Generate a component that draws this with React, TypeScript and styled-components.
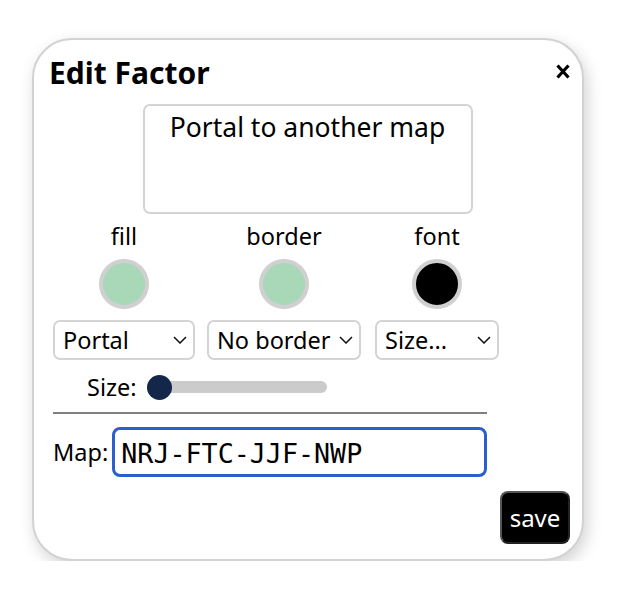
import React from "react";
import styled, { createGlobalStyle } from "styled-components";

const Global = createGlobalStyle`
  html, body { margin: 0; padding: 0; background: #fff; }
  body { font-family: "Noto Sans", "Open Sans", sans-serif; color: #000; }
  * { box-sizing: border-box; }
`;

const Page = styled.div`
  padding: 38px 0 0 32px;
`;

const Card = styled.div`
  width: 552px;
  border: 2px solid #d2d2d2;
  border-radius: 40px;
  background: #fff;
  box-shadow: 3px 6px 16px rgba(0, 0, 0, 0.18);
  padding: 12px 12px 15px 15px;
  display: flex;
  flex-direction: column;
`;

const Header = styled.div`
  display: flex;
  align-items: center;
  justify-content: space-between;
  padding-right: 0;
  height: 42px;
`;

const Title = styled.h1`
  margin: 0;
  font-size: 30px;
  line-height: 42px;
  font-weight: 700;
`;

const CloseButton = styled.button`
  border: none;
  background: none;
  padding: 0;
  width: 14px;
  height: 15px;
  display: flex;
  cursor: pointer;
  margin-top: -4px;
`;

const Description = styled.textarea`
  align-self: center;
  width: 330px;
  height: 110px;
  margin: 10px 0 0 -4px;
  border: 2px solid #d4d4d4;
  border-radius: 7px;
  padding: 3px 6px;
  font-family: inherit;
  font-size: 26.5px;
  line-height: 36px;
  text-align: center;
  resize: none;
  outline: none;
  color: #000;
`;

const Body = styled.div`
  padding-left: 4px;
  display: flex;
  flex-direction: column;
`;

const Columns = styled.div`
  display: flex;
  gap: 12px;
  margin-top: 7px;
`;

const Column = styled.div<{ $w: number; $offset?: number }>`
  width: ${(p) => p.$w}px;
  margin-left: ${(p) => p.$offset ?? 0}px;
  display: flex;
  flex-direction: column;
  align-items: center;
`;

const Label = styled.div`
  font-size: 23.5px;
  line-height: 30px;
`;

const Swatch = styled.div<{ $color: string }>`
  width: 50px;
  height: 50px;
  margin-top: 8px;
  border-radius: 50%;
  border: 4px solid #d0d0d0;
  background: ${(p) => p.$color};
`;

const SelectWrap = styled.div`
  position: relative;
  width: 100%;
  margin-top: 11px;
`;

const Select = styled.select`
  appearance: none;
  -webkit-appearance: none;
  width: 100%;
  height: 40px;
  border: 2px solid #d4d4d4;
  border-radius: 7px;
  background: #fff;
  padding: 0 28px 0 8px;
  font-family: inherit;
  font-size: 23.5px;
  color: #000;
  outline: none;
`;

const Chevron = styled.svg`
  position: absolute;
  right: 8px;
  top: 16px;
  pointer-events: none;
`;

const SizeRow = styled.div`
  display: flex;
  align-items: center;
  gap: 10px;
  margin-top: 13px;
  padding-left: 34px;
  height: 28px;
`;

const Range = styled.input`
  -webkit-appearance: none;
  appearance: none;
  width: 180px;
  height: 25px;
  margin: 0;
  background: transparent;
  &::-webkit-slider-runnable-track {
    height: 12px;
    border-radius: 6px;
    background: #cbcbcb;
  }
  &::-webkit-slider-thumb {
    -webkit-appearance: none;
    width: 25px;
    height: 25px;
    margin-top: -6.5px;
    border-radius: 50%;
    background: #14264a;
    border: none;
  }
`;

const Divider = styled.hr`
  width: 434px;
  margin: 11px 0 0 0;
  border: none;
  border-top: 2px solid #808080;
`;

const MapRow = styled.div`
  display: flex;
  align-items: center;
  gap: 4px;
  margin-top: 13px;
  width: 434px;
`;

const MapInput = styled.input`
  flex: 1;
  height: 50px;
  border: 3px solid #2b5fcc;
  border-radius: 8px;
  padding: 2px 6px 0;
  font-family: "DejaVu Sans Mono", monospace;
  font-size: 26.7px;
  color: #000;
  outline: none;
`;

const SaveButton = styled.button`
  align-self: flex-end;
  margin-top: 14px;
  width: 70px;
  height: 53px;
  border-radius: 8px;
  border: 2px solid #555;
  border-right-color: #222;
  border-bottom-color: #222;
  background: #000;
  color: #fff;
  font-family: inherit;
  font-size: 24px;
  padding: 0;
  cursor: pointer;
`;

const ChevronIcon = () => (
  <Chevron width="14" height="8" viewBox="0 0 14 8">
    <path d="M1 1 L7 7 L13 1" fill="none" stroke="#111" strokeWidth="1.5" />
  </Chevron>
);

const columns = [
  { label: "fill", color: "#a8d8b8", width: 142, offset: 0, value: "Portal", options: ["Portal", "Rectangle", "Ellipse"] },
  { label: "border", color: "#a8d8b8", width: 154, offset: 0, value: "No border", options: ["No border", "Solid", "Dashed"] },
  { label: "font", color: "#000000", width: 124, offset: 2, value: "Size...", options: ["Size...", "Small", "Large"] },
];

export default function App() {
  return (
    <>
      <Global />
      <Page>
        <Card>
          <Header>
            <Title>Edit Factor</Title>
            <CloseButton aria-label="close">
              <svg width="14" height="15" viewBox="0 0 14 15">
                <path d="M1.5 1.5 L12.5 13.5 M12.5 1.5 L1.5 13.5" stroke="#000" strokeWidth="3.2" strokeLinecap="butt" />
              </svg>
            </CloseButton>
          </Header>
          <Description defaultValue="Portal to another map" />
          <Body>
            <Columns>
              {columns.map((c) => (
                <Column key={c.label} $w={c.width} $offset={c.offset}>
                  <Label>{c.label}</Label>
                  <Swatch $color={c.color} />
                  <SelectWrap>
                    <Select defaultValue={c.value}>
                      {c.options.map((o) => (
                        <option key={o}>{o}</option>
                      ))}
                    </Select>
                    <ChevronIcon />
                  </SelectWrap>
                </Column>
              ))}
            </Columns>
            <SizeRow>
              <Label>Size:</Label>
              <Range type="range" min={0} max={100} defaultValue={0} />
            </SizeRow>
            <Divider />
            <MapRow>
              <Label>Map:</Label>
              <MapInput defaultValue="NRJ-FTC-JJF-NWP" />
            </MapRow>
          </Body>
          <SaveButton>save</SaveButton>
        </Card>
      </Page>
    </>
  );
}
